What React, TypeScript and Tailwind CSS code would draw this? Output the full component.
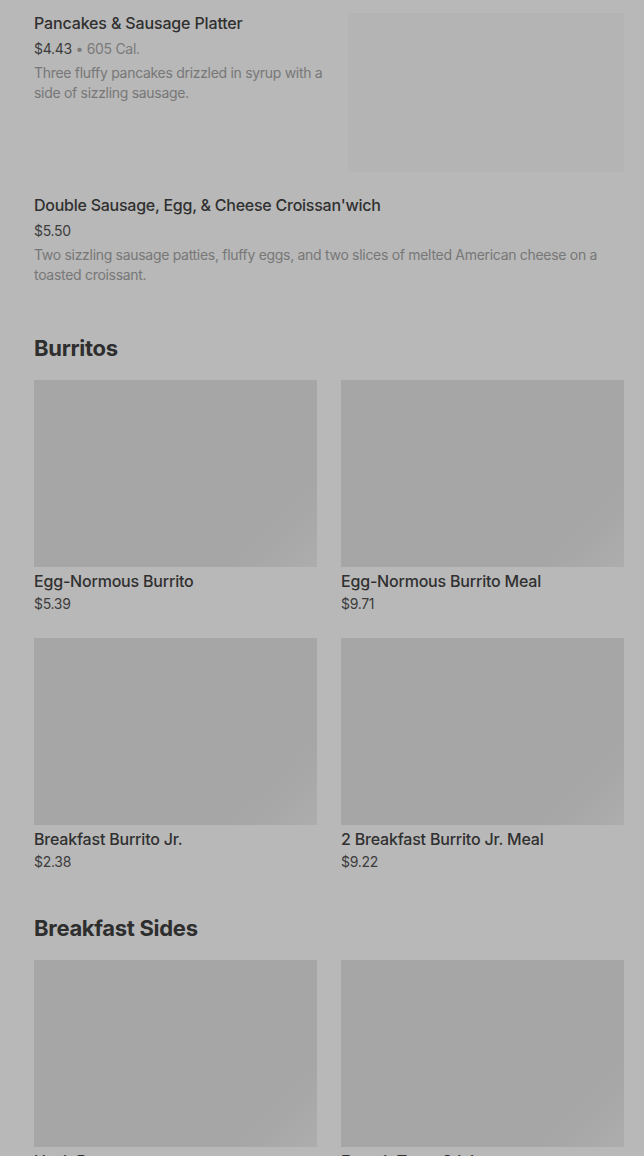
import React from "react";

type GridItem = { name: string; price: string };

const burritos: GridItem[] = [
  { name: "Egg-Normous Burrito", price: "$5.39" },
  { name: "Egg-Normous Burrito Meal", price: "$9.71" },
  { name: "Breakfast Burrito Jr.", price: "$2.38" },
  { name: "2 Breakfast Burrito Jr. Meal", price: "$9.22" },
];

const sides: GridItem[] = [
  { name: "Hash Browns", price: "$2.19" },
  { name: "French Toast Sticks", price: "$3.49" },
];

const GridCard = ({ item }: { item: GridItem }) => (
  <div className="flex flex-col">
    <div className="h-[187px] w-full bg-[linear-gradient(135deg,#a6a6a6_82%,#adadad)]" />
    <p className="mt-0.5 text-base leading-6 font-medium tracking-[-0.2px] text-[#303030]">{item.name}</p>
    <p className="mt-px text-sm leading-5 tracking-[-0.3px] text-[#3c3c3c]">{item.price}</p>
  </div>
);

const Section = ({ title, items }: { title: string; items: GridItem[] }) => (
  <section className="pt-10">
    <h2 className="text-[22px] leading-8 font-bold text-[#2e2e2e] tracking-[-0.3px]">{title}</h2>
    <div className="mt-4 grid grid-cols-2 gap-x-6 gap-y-6">
      {items.map((item) => (
        <GridCard key={item.name} item={item} />
      ))}
    </div>
  </section>
);

export default function App() {
  return (
    <div
      className="min-h-[1156px] bg-[#b8b8b8] pl-[34px] pr-5 pt-[11px] pb-10"
      style={{ fontFamily: "Inter, 'Liberation Sans', sans-serif" }}
    >
      <div className="flex gap-4">
        <div className="flex-1">
          <h3 className="text-base leading-6 font-medium tracking-[-0.15px] text-[#303030]">
            Pancakes &amp; Sausage Platter
          </h3>
          <p className="mt-1 text-sm leading-5 tracking-[-0.3px] text-[#3c3c3c]">
            $4.43 <span className="text-[#7a7a7a]">• 605 Cal.</span>
          </p>
          <p className="mt-1 text-sm leading-5 tracking-[-0.3px] text-[#777777]">
            Three fluffy pancakes drizzled in syrup with a side of sizzling sausage.
          </p>
        </div>
        <div className="mt-0.5 h-[159px] w-[276px] shrink-0 bg-[#b4b4b4]" />
      </div>

      <div className="mt-[21px]">
        <h3 className="text-base leading-6 font-medium tracking-[-0.25px] text-[#303030]">
          Double Sausage, Egg, &amp; Cheese Croissan'wich
        </h3>
        <p className="mt-1 text-sm leading-5 tracking-[-0.3px] text-[#3c3c3c]">$5.50</p>
        <p className="mt-1 text-sm leading-5 tracking-[-0.3px] text-[#777777]">
          Two sizzling sausage patties, fluffy eggs, and two slices of melted American cheese on a toasted
          croissant.
        </p>
      </div>

      <div className="mt-[7px]">
        <Section title="Burritos" items={burritos} />
      </div>
      <Section title="Breakfast Sides" items={sides} />
    </div>
  );
}
